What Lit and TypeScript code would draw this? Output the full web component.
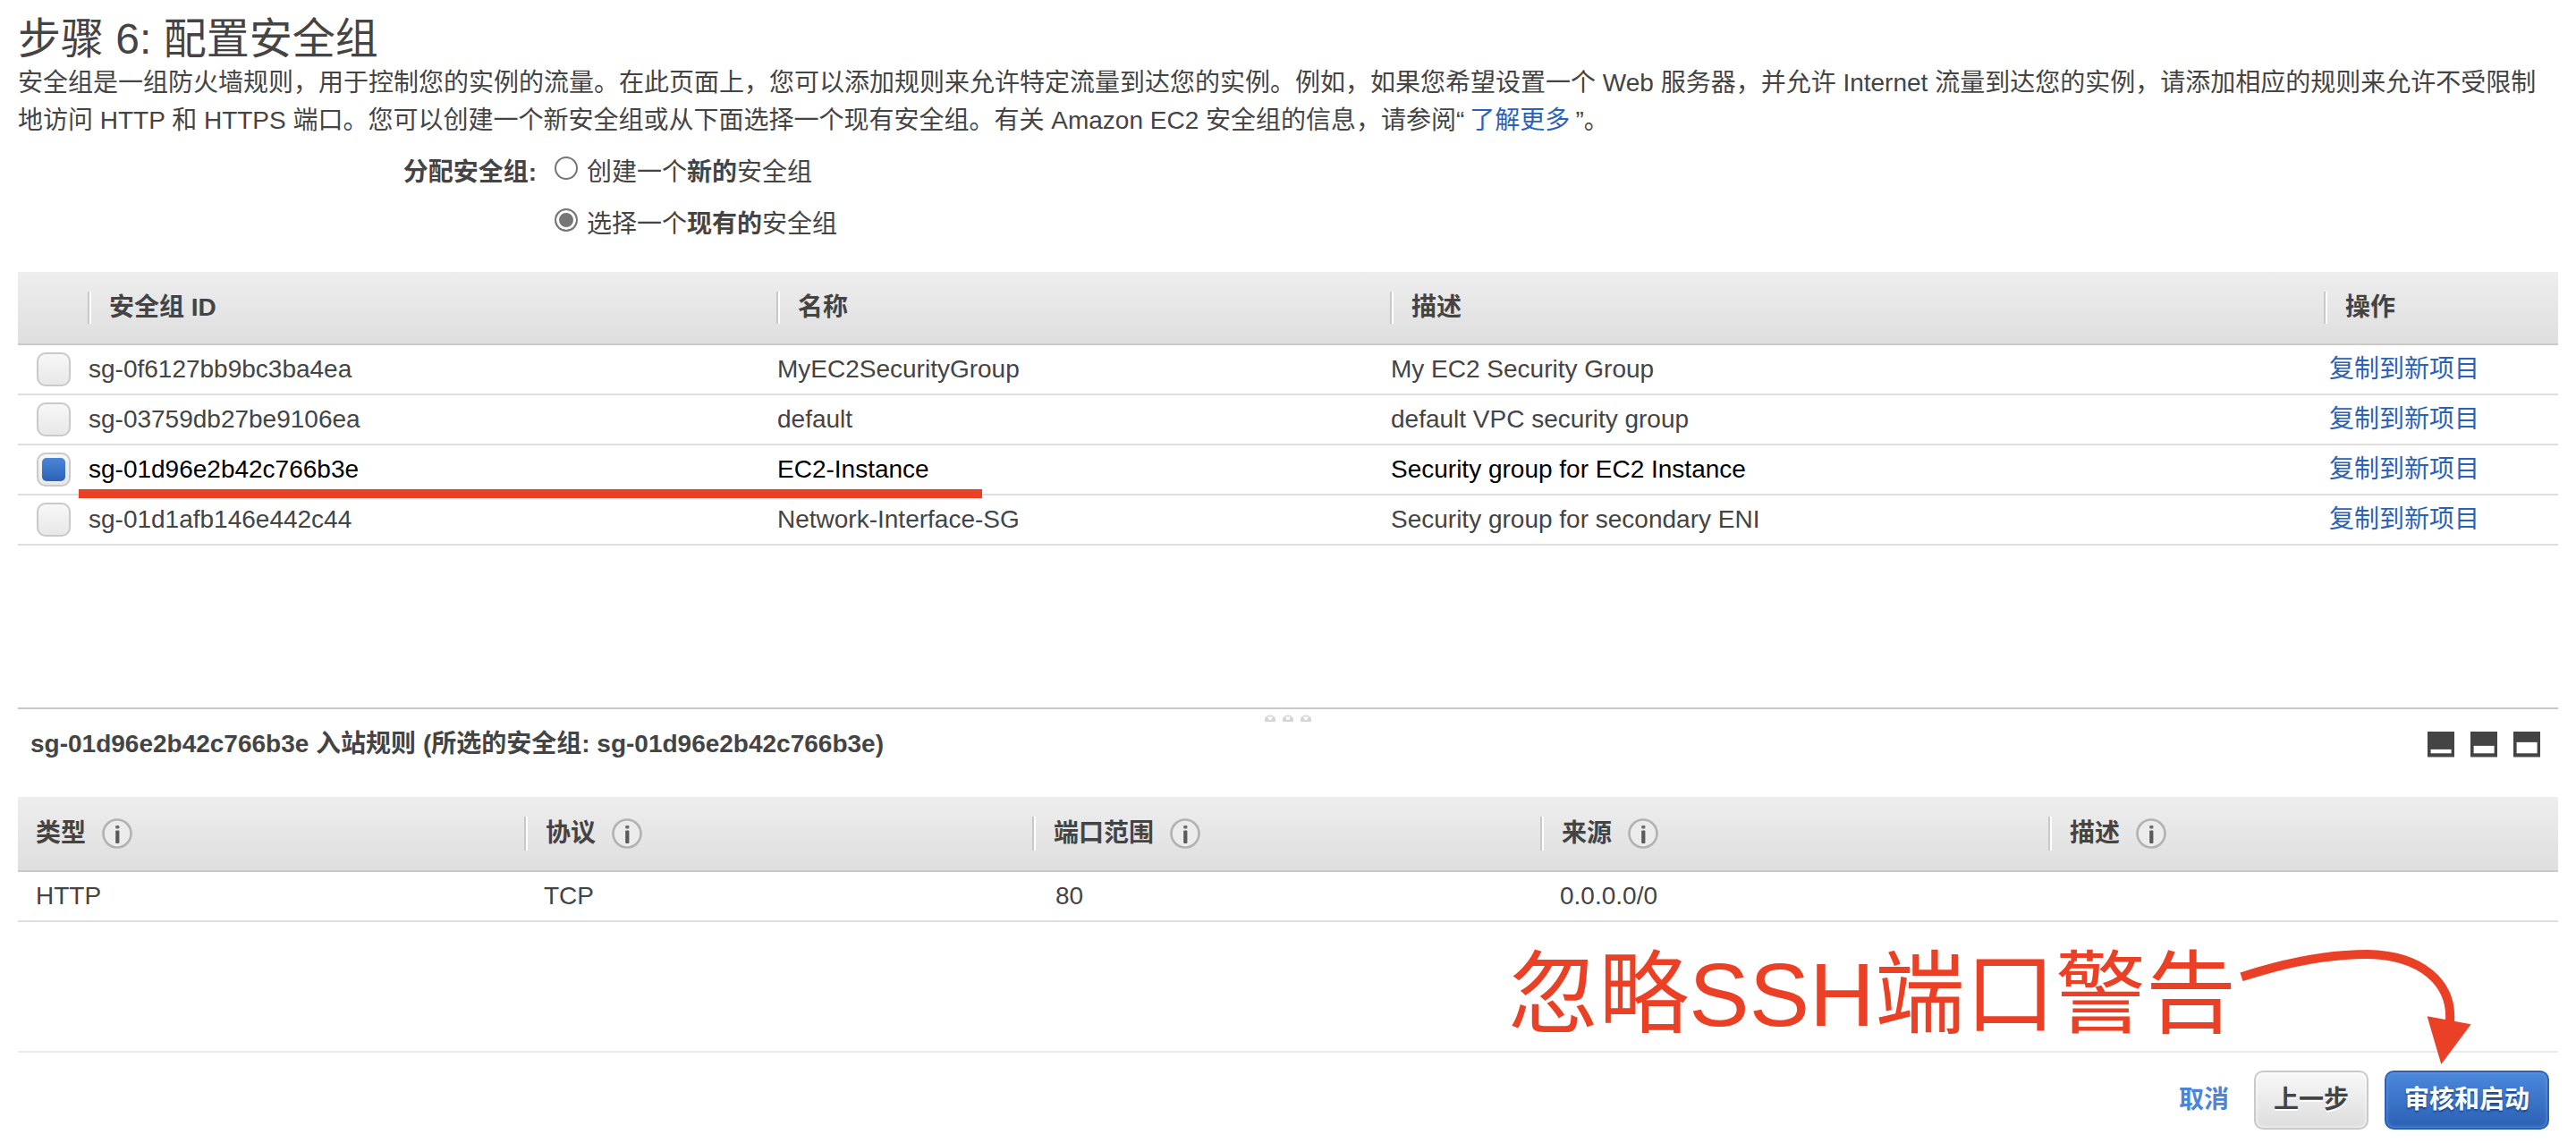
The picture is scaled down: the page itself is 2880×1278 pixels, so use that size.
import { LitElement, html, svg, css } from "lit";
import { customElement, property, state } from "lit/decorators.js";
import { classMap } from "lit/directives/class-map.js";

interface SecurityGroup {
  id: string;
  name: string;
  description: string;
}

interface InboundRule {
  type: string;
  protocol: string;
  ports: string;
  source: string;
  description: string;
}

const GROUPS: SecurityGroup[] = [
  { id: "sg-0f6127bb9bc3ba4ea", name: "MyEC2SecurityGroup", description: "My EC2 Security Group" },
  { id: "sg-03759db27be9106ea", name: "default", description: "default VPC security group" },
  { id: "sg-01d96e2b42c766b3e", name: "EC2-Instance", description: "Security group for EC2 Instance" },
  { id: "sg-01d1afb146e442c44", name: "Network-Interface-SG", description: "Security group for secondary ENI" },
];

const RULES: InboundRule[] = [
  { type: "HTTP", protocol: "TCP", ports: "80", source: "0.0.0.0/0", description: "" },
];

const RULE_COLUMNS = ["类型", "协议", "端口范围", "来源", "描述"];

/** Round "i" help button shown beside a column title. */
@customElement("info-button")
class InfoButton extends LitElement {
  @property() label = "";

  static styles = css`
    :host {
      display: block;
    }
    .info {
      display: block;
      margin: 0;
      padding: 0;
      border: 0;
      background: none;
      cursor: pointer;
    }
    .icon {
      display: block;
      width: 34px;
      height: 34px;
    }
  `;

  render() {
    return html`<button class="info" type="button" aria-label=${this.label}>
      <svg class="icon" viewBox="0 0 34 34" aria-hidden="true">
        <circle cx="17" cy="17" r="15.5" fill="#ececec" stroke="#b2b2b2" stroke-width="2.6" />
        <rect x="15.2" y="8" width="4.2" height="3.4" rx="1" fill="#6a6a6a" />
        <rect x="15.2" y="13.4" width="4.2" height="14.6" rx="1" fill="#5a5a5a" />
      </svg>
    </button>`;
  }
}

/** Button that picks how much room the lower pane takes. */
@customElement("pane-button")
class PaneButton extends LitElement {
  @property() label = "";
  @property({ type: Number }) fill = 4;

  static styles = css`
    :host {
      display: block;
    }
    .pane {
      display: block;
      margin: 0;
      padding: 0;
      border: 0;
      background: none;
      cursor: pointer;
    }
    .icon {
      display: block;
      width: 30px;
      height: 29px;
    }
  `;

  render() {
    const top = 24.3 - this.fill;
    return html`<button class="pane" type="button" aria-label=${this.label}>
      <svg class="icon" viewBox="0 0 30 29" aria-hidden="true">
        <rect width="30" height="28" fill="#444" />
        <rect y="28" width="30" height="1" fill="#aaa" />
        ${svg`<rect x="3.6" y=${top} width="23" height=${this.fill} fill="#fff" />`}
      </svg>
    </button>`;
  }
}

@customElement("app-root")
class AppRoot extends LitElement {
  @state() private selected = "sg-01d96e2b42c766b3e";
  @state() private mode = "existing";

  static styles = css`
    :host {
      display: flex;
      flex-direction: column;
      position: relative;
      min-height: 100vh;
      background: #fff;
      color: #444;
      font-family: "Liberation Sans", "Noto Sans CJK SC", sans-serif;
      font-size: 28px;
      line-height: 42px;
      text-spacing-trim: space-all;
    }
    .groups {
      flex: 1;
      padding: 16px 20px 40px;
    }
    .title {
      margin: 0;
      font-size: 48px;
      line-height: 56px;
      font-weight: 400;
    }
    .intro {
      margin: 0;
    }
    .link {
      color: #2a62ba;
      text-decoration: none;
    }
    .intro .link {
      margin: 0 6px;
    }
    .assign {
      display: grid;
      grid-template-columns: 580px 1fr;
      column-gap: 20px;
      margin: 8px 0 24px;
    }
    .assign-label {
      text-align: right;
      font-weight: 700;
      line-height: 58px;
    }
    .option {
      display: flex;
      align-items: center;
      gap: 10px;
      height: 58px;
    }
    .radio {
      appearance: none;
      box-sizing: border-box;
      width: 26px;
      height: 26px;
      margin: 0 0 10px;
      border: 2px solid #767676;
      border-radius: 50%;
      background: #fff;
    }
    .radio:checked {
      background: #767676;
      box-shadow: inset 0 0 0 3px #fff;
    }
    .table {
      width: 100%;
      table-layout: fixed;
      border-collapse: separate;
      border-spacing: 0;
    }
    .header {
      background: linear-gradient(#eeeeee, #dedede);
    }
    .header th {
      position: relative;
      height: 80px;
      padding: 0 0 0 24px;
      border-bottom: 2px solid #cacaca;
      text-align: left;
      font-weight: 700;
    }
    .header th + th::before {
      content: "";
      position: absolute;
      left: 0;
      top: 22px;
      height: 36px;
      border-left: 2px solid #c8c8c8;
      border-right: 2px solid #fff;
    }
    .row td {
      position: relative;
      height: 54px;
      padding: 0 0 0 1px;
      border-bottom: 2px solid #dfdfdf;
      line-height: 40px;
    }
    .row.selected {
      color: #000;
    }
    .row .pick {
      padding-left: 21px;
    }
    .row .action {
      padding-left: 6px;
    }
    .col-pick {
      width: 78px;
    }
    .col-id {
      width: 770px;
    }
    .col-name {
      width: 686px;
    }
    .col-action {
      width: 262px;
    }
    .check {
      appearance: none;
      display: block;
      box-sizing: border-box;
      width: 38px;
      height: 38px;
      margin: 0;
      padding: 4px;
      border: 2px solid #c9c9c9;
      border-radius: 10px;
      background: linear-gradient(#f7f7f7, #e8e8e8);
    }
    .check:checked::before {
      content: "";
      display: block;
      height: 26px;
      border-radius: 5px;
      background: linear-gradient(#4a86d8, #2c62b4);
    }
    .underline {
      position: absolute;
      z-index: 1;
      left: -10px;
      bottom: -5px;
      width: 1010px;
      height: 10px;
      background: #ea4025;
      pointer-events: none;
    }
    .rules {
      position: relative;
      box-sizing: border-box;
      min-height: 384px;
      margin: 0 20px;
      border-top: 2px solid #c9c9c9;
    }
    .grip {
      position: absolute;
      top: 6px;
      left: 50%;
      width: 52px;
      height: 8px;
      transform: translateX(-50%);
    }
    .rules-bar {
      display: flex;
      align-items: center;
      justify-content: space-between;
      height: 78px;
      margin-bottom: 20px;
      padding: 0 20px 0 14px;
    }
    .rules-title {
      margin: 0;
      font-size: 28px;
      font-weight: 700;
    }
    .panes {
      display: flex;
      gap: 18px;
    }
    .rules .header th {
      height: 82px;
      padding-left: 22px;
    }
    .rules .header th:first-child {
      padding-left: 20px;
    }
    .rules .header th + th::before {
      left: -2px;
      height: 38px;
    }
    .column {
      display: flex;
      align-items: center;
      gap: 18px;
    }
    .rules .row td {
      padding-left: 20px;
    }
    .rules .row .ports {
      padding-left: 24px;
    }
    .footer {
      display: flex;
      align-items: center;
      justify-content: flex-end;
      gap: 18px;
      margin: 0 20px;
      padding: 20px 10px 15px;
      border-top: 2px solid #ebebeb;
    }
    .button {
      box-sizing: border-box;
      height: 66px;
      margin: 0;
      padding: 0 20px;
      border: 2px solid #c9c9c9;
      border-radius: 10px;
      background: linear-gradient(#f8f8f8, #dddddd);
      box-shadow: inset 0 0 4px #fff;
      color: #444;
      font: inherit;
      font-weight: 700;
      text-shadow: 0 2px 0 #fff;
      cursor: pointer;
    }
    .button.primary {
      border-color: #2c62b4;
      background: linear-gradient(#4b88dc, #2b60b3);
      box-shadow: inset 0 0 4px #6b9be0;
      color: #fff;
      text-shadow: 0 2px 2px #1d4688;
    }
    .button.plain {
      padding: 0 8px;
      border-color: transparent;
      background: none;
      box-shadow: none;
      color: #4a86d8;
      text-shadow: none;
    }
    .callout {
      position: absolute;
      right: 110px;
      bottom: 86px;
      display: flex;
      align-items: flex-start;
      color: #ea4025;
      pointer-events: none;
    }
    .callout-text {
      font-size: 101px;
      line-height: 104px;
      white-space: nowrap;
    }
    .callout-arrow {
      width: 270px;
      height: 132px;
    }
  `;

  private renderGroup(group: SecurityGroup) {
    const on = group.id === this.selected;
    return html`<tr class=${classMap({ row: true, selected: on })}>
      <td class="pick">
        <input
          class="check"
          type="checkbox"
          aria-label=${group.id}
          .checked=${on}
          @change=${() => (this.selected = group.id)}
        />
      </td>
      <td>${group.id}${on ? html`<span class="underline"></span>` : ""}</td>
      <td>${group.name}</td>
      <td>${group.description}</td>
      <td class="action"><a class="link" href="#copy">复制到新项目</a></td>
    </tr>`;
  }

  private renderGrip() {
    return html`<svg class="grip" viewBox="0 0 52 8" aria-hidden="true">
      ${[0, 20, 40].map(
        (x) => svg`<path d="M${x} 8V5C${x + 1} -1 ${x + 11} -1 ${x + 12} 5V8Z" fill="#d6d6d6" />
          <path d="M${x + 3} 2.500H${x + 9}L${x + 7} 6H${x + 5}Z" fill="#fff" />`,
      )}
    </svg>`;
  }

  render() {
    return html`
      <section class="groups">
        <h1 class="title">步骤 6: 配置安全组</h1>
        <p class="intro">安全组是一组防火墙规则，用于控制您的实例的流量。在此页面上，您可以添加规则来允许特定流量到达您的实例。例如，如果您希望设置一个 Web 服务器，并允许 Internet 流量到达您的实例，请添加相应的规则来允许不受限制地访问 HTTP 和 HTTPS 端口。您可以创建一个新安全组或从下面选择一个现有安全组。有关 Amazon EC2 安全组的信息，请参阅“<a class="link" href="#more">了解更多</a>”。</p>
        <div class="assign" role="radiogroup" aria-labelledby="assign-label">
          <span class="assign-label" id="assign-label">分配安全组:</span>
          <div>
            <div class="option">
              <input class="radio" type="radio" name="assign" id="assign-new"
                .checked=${this.mode === "new"} @change=${() => (this.mode = "new")} />
              <label for="assign-new">创建一个<b>新的</b>安全组</label>
            </div>
            <div class="option">
              <input class="radio" type="radio" name="assign" id="assign-existing"
                .checked=${this.mode === "existing"} @change=${() => (this.mode = "existing")} />
              <label for="assign-existing">选择一个<b>现有的</b>安全组</label>
            </div>
          </div>
        </div>
        <table class="table">
          <colgroup>
            <col class="col-pick" />
            <col class="col-id" />
            <col class="col-name" />
            <col />
            <col class="col-action" />
          </colgroup>
          <thead>
            <tr class="header">
              <th></th>
              <th scope="col">安全组 ID</th>
              <th scope="col">名称</th>
              <th scope="col">描述</th>
              <th scope="col">操作</th>
            </tr>
          </thead>
          <tbody>
            ${GROUPS.map((group) => this.renderGroup(group))}
          </tbody>
        </table>
      </section>

      <section class="rules">
        ${this.renderGrip()}
        <div class="rules-bar">
          <h2 class="rules-title">${this.selected} 入站规则 (所选的安全组: ${this.selected})</h2>
          <div class="panes">
            <pane-button label="最小化" .fill=${4.4}></pane-button>
            <pane-button label="一半" .fill=${8.4}></pane-button>
            <pane-button label="最大化" .fill=${12.4}></pane-button>
          </div>
        </div>
        <table class="table">
          <thead>
            <tr class="header">
              ${RULE_COLUMNS.map(
                (name) => html`<th scope="col">
                  <div class="column"><span>${name}</span><info-button label=${name}></info-button></div>
                </th>`,
              )}
            </tr>
          </thead>
          <tbody>
            ${RULES.map(
              (rule) => html`<tr class="row">
                <td>${rule.type}</td>
                <td>${rule.protocol}</td>
                <td class="ports">${rule.ports}</td>
                <td>${rule.source}</td>
                <td>${rule.description}</td>
              </tr>`,
            )}
          </tbody>
        </table>
      </section>

      <footer class="footer">
        <button class="button plain" type="button">取消</button>
        <button class="button" type="button">上一步</button>
        <button class="button primary" type="button">审核和启动</button>
      </footer>

      <div class="callout">
        <span class="callout-text">忽略SSH端口警告</span>
        <svg class="callout-arrow" viewBox="0 0 270 132" aria-hidden="true">
          <path d="M6 32.300C56 16 104 7 147 7C206 8 242 38 239 82" fill="none" stroke="currentColor" stroke-width="10" />
          <path d="M213.600 76.300L262.600 85.300L229.300 130Z" fill="currentColor" />
        </svg>
      </div>
    `;
  }
}
